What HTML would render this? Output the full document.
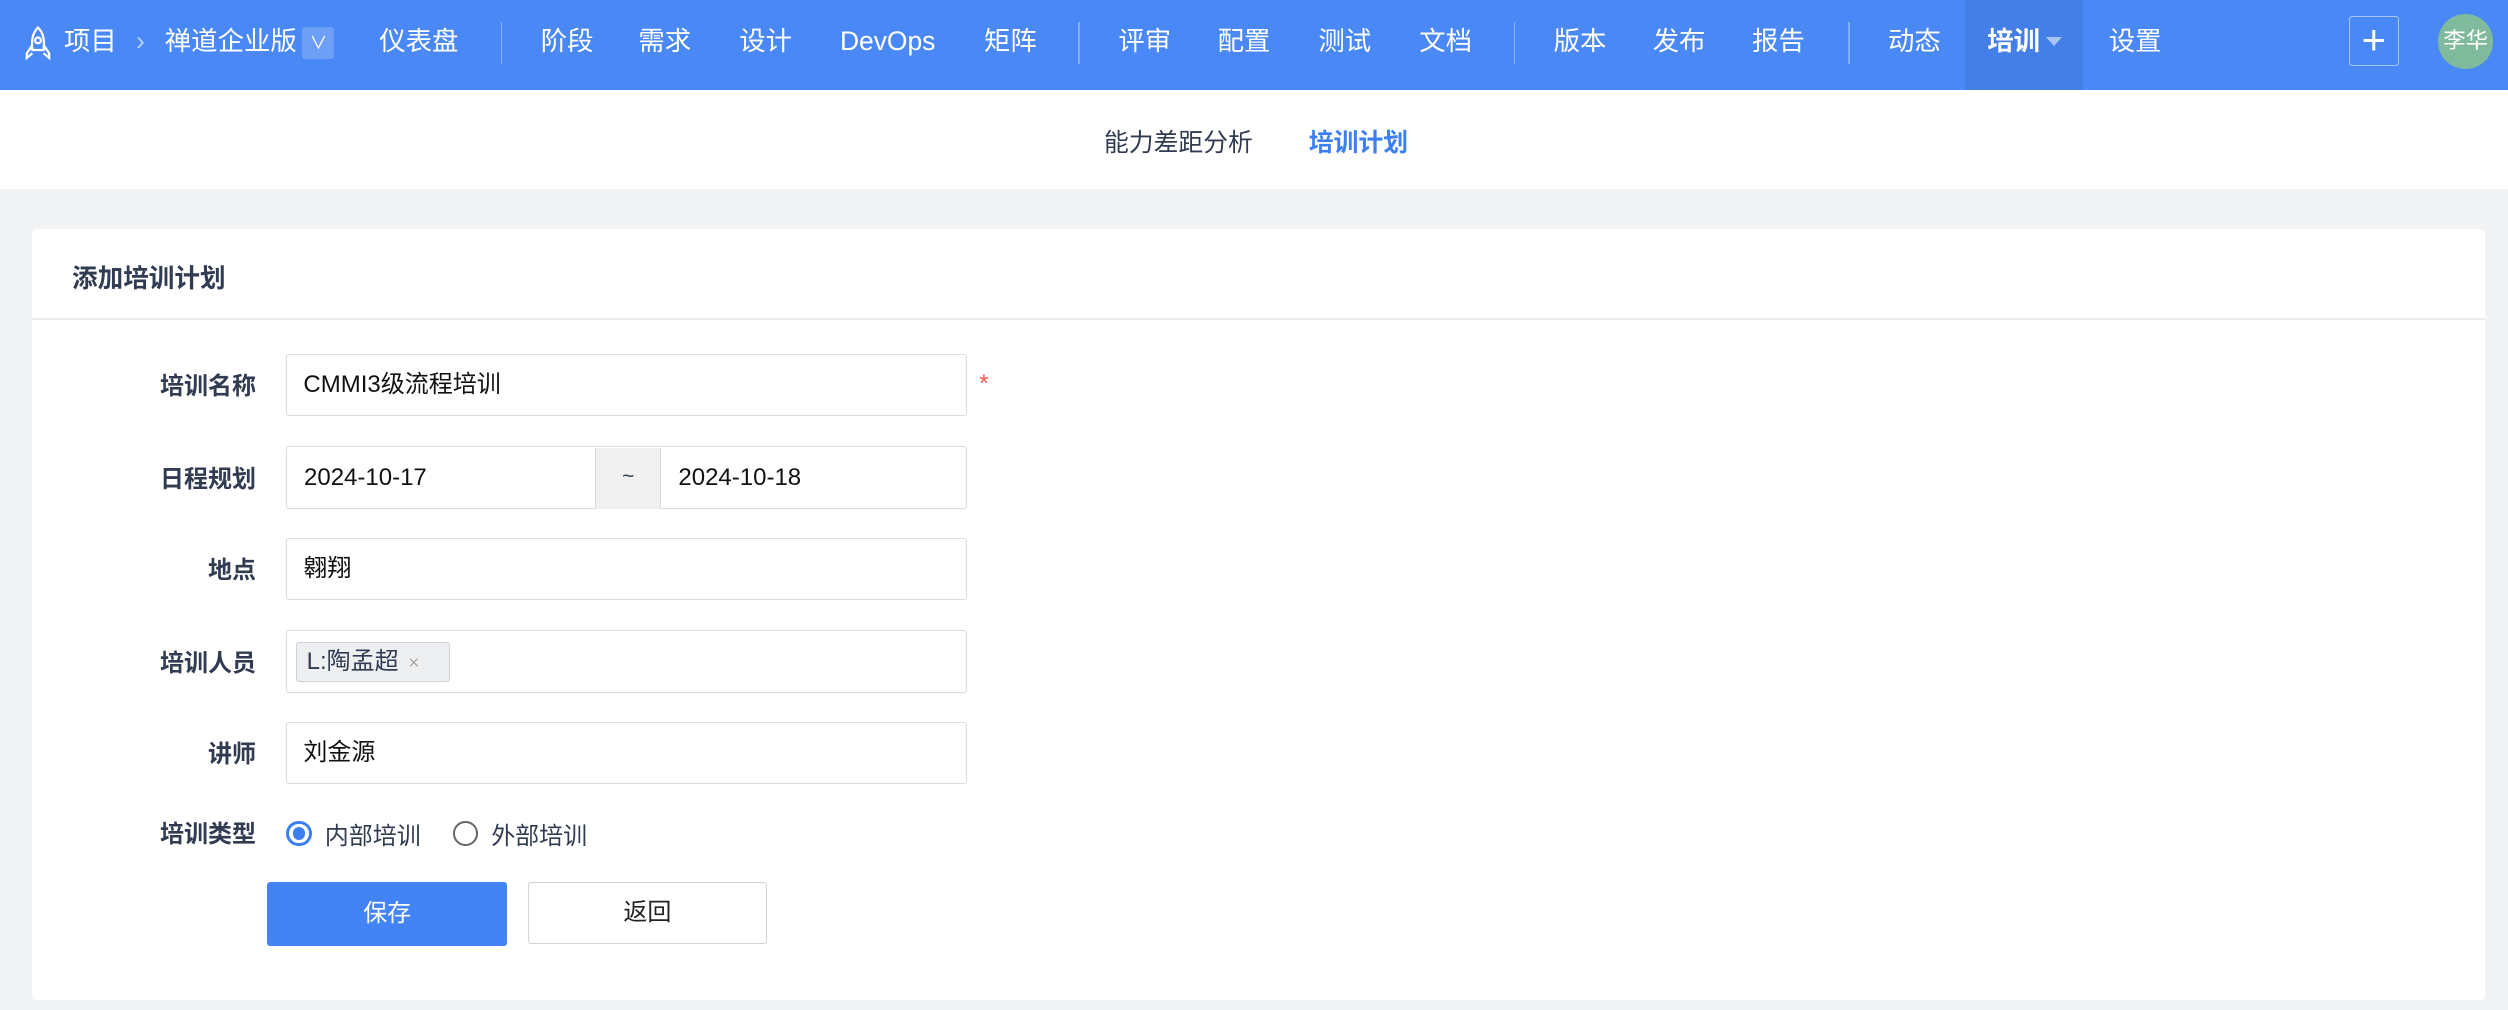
<!DOCTYPE html>
<html><head><meta charset="utf-8"><style>
html,body{margin:0;padding:0}
body{width:1567.5px;height:631.25px;zoom:1.6;background:#f2f3f5;font-family:"Liberation Sans","Noto Sans CJK SC",sans-serif;position:relative;overflow:hidden;color:#313c52}
.a{position:absolute;white-space:nowrap}
#hd{position:absolute;left:0;top:0;width:100%;height:56px;background:#4a89f5}
.n{position:absolute;top:0;height:56px;line-height:52px;color:#fff;font-size:16.5px}
.dv{position:absolute;top:14px;width:1px;height:26px;background:rgba(255,255,255,.3)}
#sub{position:absolute;left:0;top:56px;width:100%;height:62px;background:#fff}
#card{position:absolute;left:20px;top:143px;width:1533px;height:482px;background:#fff;border-radius:3px}
.lb{position:absolute;width:160px;text-align:right;font-size:15px;font-weight:bold;color:#313c52}
.in{position:absolute;left:179px;width:414px;height:38px;border:1px solid #dcdcdc;border-radius:2px;font-size:15px;line-height:38px;padding-left:10px;box-sizing:content-box;color:#111}
</style></head><body>
<div id="hd">
<svg class="a" style="left:14px;top:16px" width="20" height="22" viewBox="0 0 20 22" fill="none" stroke="#fff" stroke-width="1.4"><path d="M10 1C6 5 6 10 6.5 15h7C14 10 14 5 10 1z"/><circle cx="10" cy="9" r="1.8"/><path d="M6.5 12L3 17v3l3.5-3M13.5 12L17 17v3l-3.5-3"/></svg>
<div class="n" style="left:40px">项目</div>
<div class="n" style="left:85px;color:#b9d0fa">›</div>
<div class="n" style="left:103px">禅道企业版</div>
<div class="a" style="left:189px;top:17px;width:20px;height:20px;background:#6e9ff7;border-radius:2px;color:#fff;font-size:11px;text-align:center;line-height:20px">∨</div>
<div class="n" style="left:237px">仪表盘</div>
<div class="dv" style="left:313px"></div>
<div class="n" style="left:338px">阶段</div>
<div class="n" style="left:399px">需求</div>
<div class="n" style="left:462px">设计</div>
<div class="n" style="left:525px">DevOps</div>
<div class="n" style="left:615px">矩阵</div>
<div class="dv" style="left:674px"></div>
<div class="n" style="left:699px">评审</div>
<div class="n" style="left:761px">配置</div>
<div class="n" style="left:824px">测试</div>
<div class="n" style="left:887px">文档</div>
<div class="dv" style="left:946px"></div>
<div class="n" style="left:971px">版本</div>
<div class="n" style="left:1033px">发布</div>
<div class="n" style="left:1095px">报告</div>
<div class="dv" style="left:1155px"></div>
<div class="n" style="left:1180px">动态</div>
<div class="a" style="left:1228px;top:0;width:74px;height:56px;background:#437fe6"></div>
<div class="n" style="left:1242px;font-weight:bold">培训</div>
<div class="a" style="left:1279px;top:23px;width:0;height:0;border-left:5px solid transparent;border-right:5px solid transparent;border-top:6px solid #a9c5f8"></div>
<div class="n" style="left:1318px">设置</div>
<div class="a" style="left:1468px;top:10px;width:30px;height:30px;border:1px solid rgba(255,255,255,.5);border-radius:2px;color:#fff;font-size:26px;text-align:center;line-height:29px">+</div>
<div class="a" style="left:1524px;top:9px;width:34px;height:34px;border-radius:50%;background:#7eba9b;color:#fff;font-size:14px;text-align:center;line-height:34px">李华</div>
</div>
<div id="sub">
<div class="a" style="left:690px;top:21px;font-size:15.5px;color:#313c52">能力差距分析</div>
<div class="a" style="left:818px;top:21px;font-size:15.5px;color:#3d7ff0;font-weight:bold">培训计划</div>
</div>
<div id="card">
<div class="a" style="left:25px;top:18px;font-size:16px;font-weight:bold;color:#313c52">添加培训计划</div>
<div class="a" style="left:0;top:56px;width:100%;height:1px;background:#ebedf0"></div>
</div>
<div class="lb" style="left:0;top:229px">培训名称</div>
<div class="in" style="top:221px">CMMI3级流程培训</div>
<div class="a" style="left:612px;top:231px;color:#e55;font-size:15px">*</div>
<div class="lb" style="left:0;top:287px">日程规划</div>
<div class="in" style="top:279px;width:424px;padding:0"></div>
<div class="a" style="left:190px;top:279px;line-height:40px;font-size:15px;color:#111">2024-10-17</div>
<div class="a" style="left:372px;top:280px;width:40px;height:38px;background:#f0f0f0;border-left:1px solid #dcdcdc;border-right:1px solid #dcdcdc;text-align:center;line-height:36px;font-size:13px">~</div>
<div class="a" style="left:424px;top:279px;line-height:40px;font-size:15px;color:#111">2024-10-18</div>
<div class="lb" style="left:0;top:344px">地点</div>
<div class="in" style="top:336px">翱翔</div>
<div class="lb" style="left:0;top:402px">培训人员</div>
<div class="in" style="top:394px"></div>
<div class="a" style="left:185px;top:401px;width:95px;height:24px;background:#eeeff1;border:1px solid #cfd2d8;border-radius:2px;font-size:15px;line-height:24px;color:#313c52"><span style="margin-left:6px">L:陶孟超</span><span style="margin-left:6px;color:#aaa;font-size:12px">×</span></div>
<div class="lb" style="left:0;top:459px">讲师</div>
<div class="in" style="top:451px">刘金源</div>
<div class="lb" style="left:0;top:509px">培训类型</div>
<div class="a" style="left:179px;top:513px;width:12px;height:12px;border:2px solid #3d7ff0;border-radius:50%"><div style="margin:2px;width:8px;height:8px;border-radius:50%;background:#3d7ff0"></div></div>
<div class="a" style="left:203px;top:510px;font-size:15px">内部培训</div>
<div class="a" style="left:283px;top:513px;width:13px;height:13px;border:1.5px solid #666;border-radius:50%"></div>
<div class="a" style="left:307px;top:510px;font-size:15px">外部培训</div>
<div class="a" style="left:167px;top:551px;width:150px;height:40px;background:#4284f5;border-radius:2px;color:#fff;text-align:center;line-height:40px;font-size:15px">保存</div>
<div class="a" style="left:330px;top:551px;width:148px;height:38px;border:1px solid #d4d4d4;border-radius:2px;text-align:center;line-height:38px;font-size:15px;color:#222;background:#fff">返回</div>
</body></html>
